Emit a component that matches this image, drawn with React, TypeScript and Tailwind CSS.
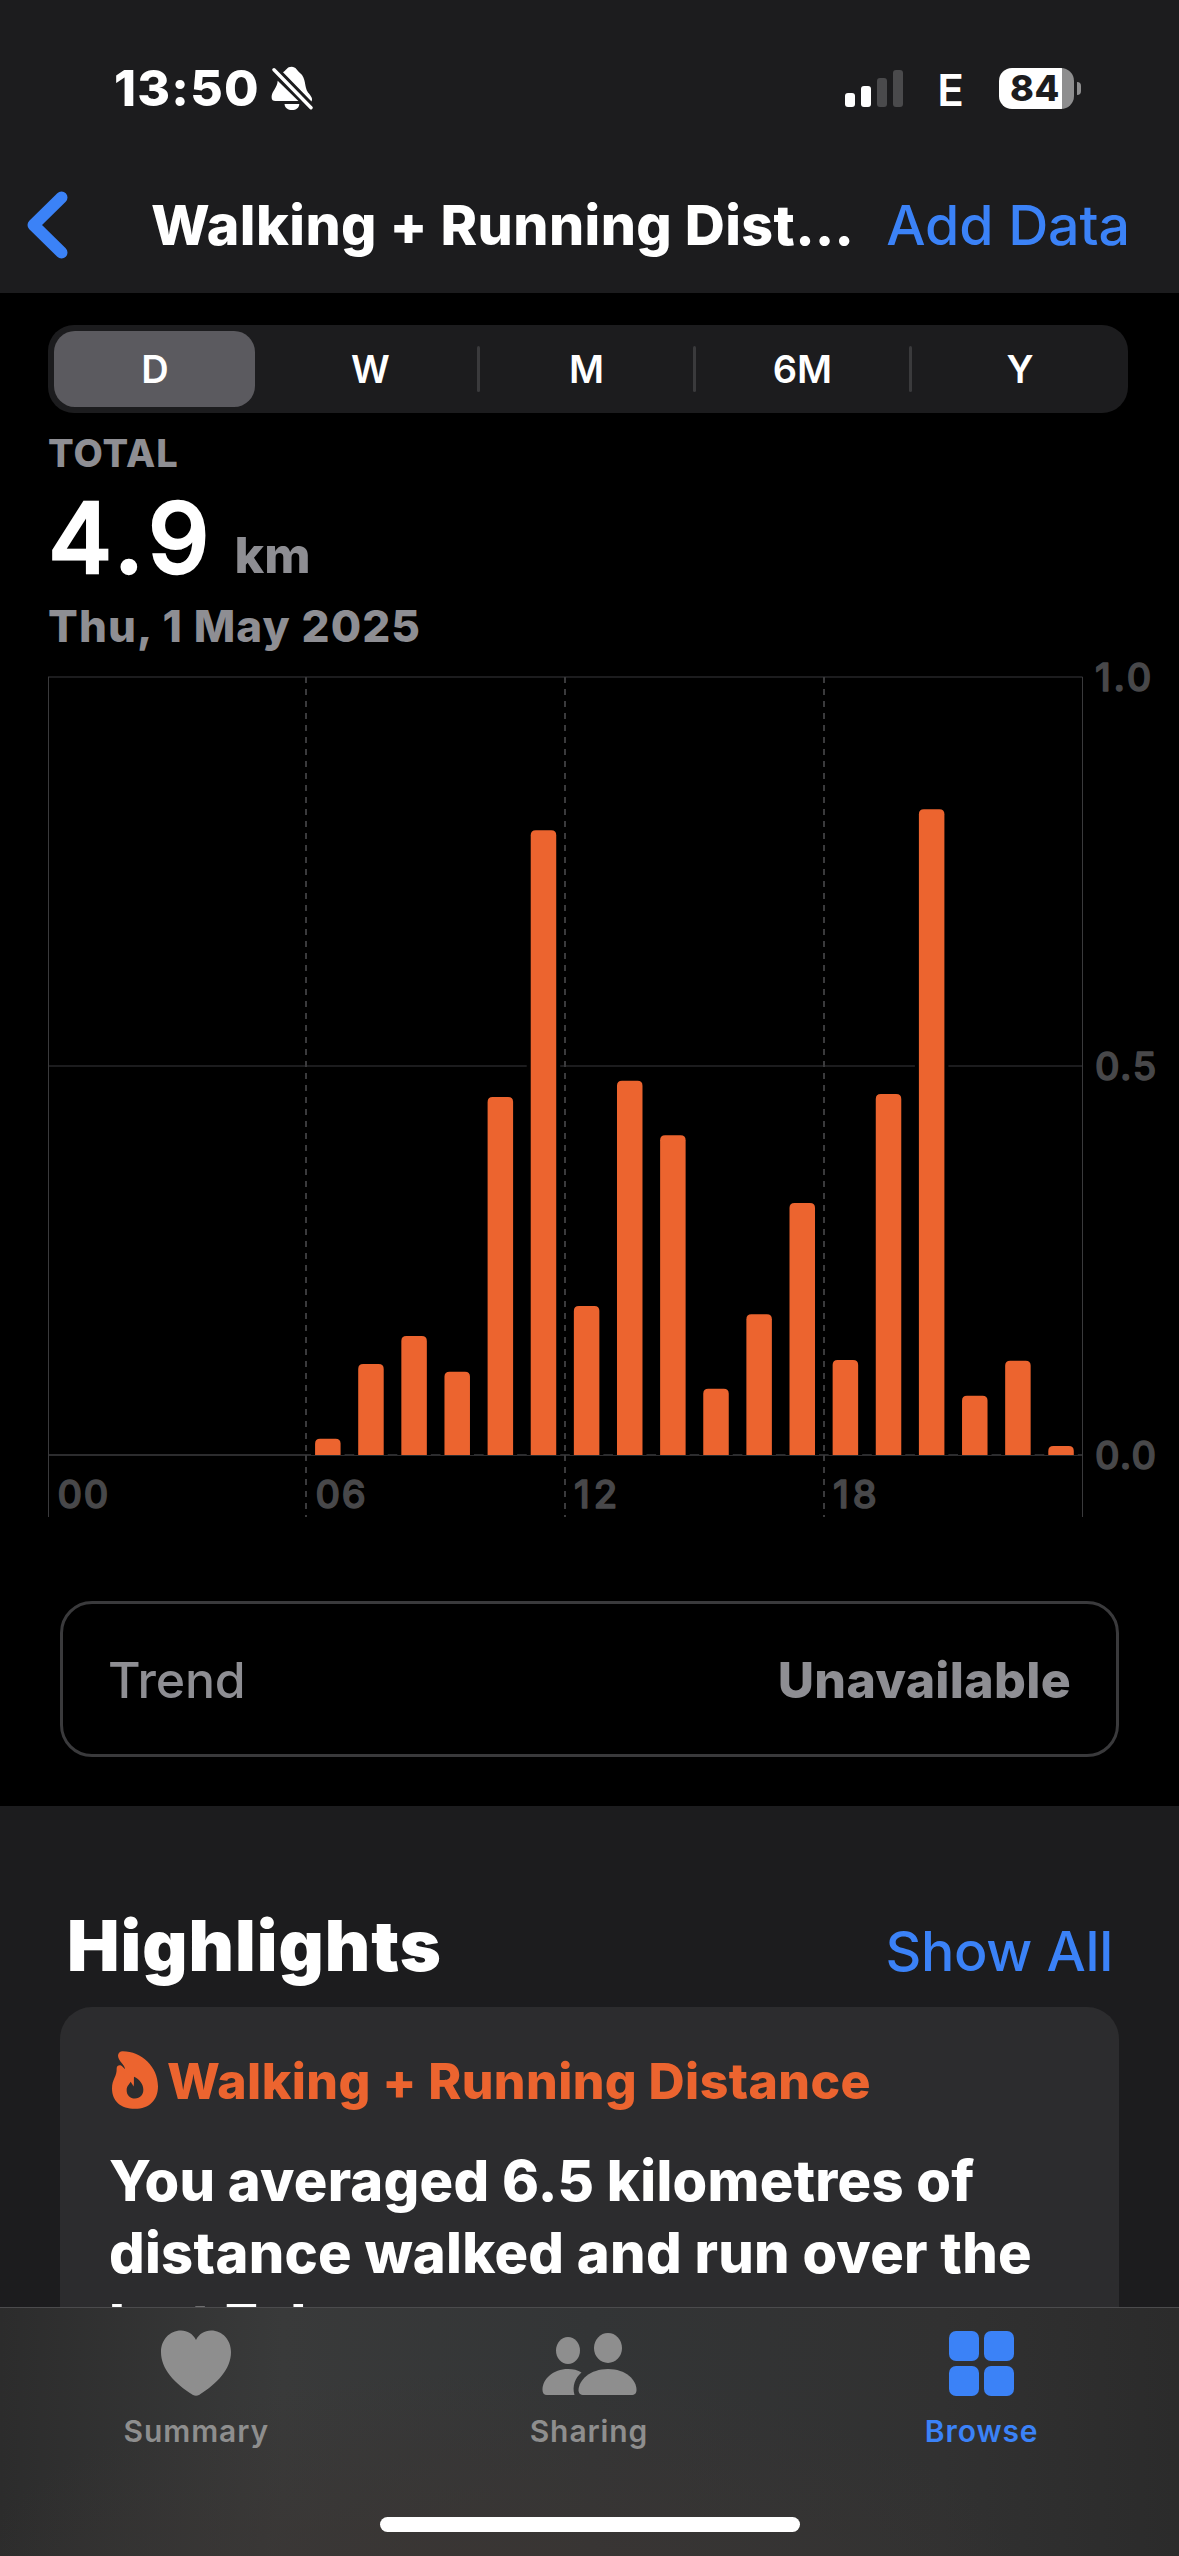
import React from "react";
import clsx from "clsx";

const RANGES = ["D", "W", "M", "6M", "Y"];

// Kilometres per hour of the day
const HOURLY = [
  0, 0, 0, 0, 0, 0, 0.021, 0.117, 0.153, 0.107, 0.46, 0.803, 0.1915, 0.481, 0.411, 0.085, 0.181,
  0.324, 0.122, 0.464, 0.83, 0.076, 0.121, 0.0116,
];

const CHART = { left: 48, right: 1082.5, top: 677, base: 1455, bottom: 1517 };
const HOUR_WIDTH = 43.13;

function BellOff() {
  return (
    <svg width="43" height="44" viewBox="0 0 43 44" fill="white">
      <path d="M6.7 14.7C6.3 22 .6 25 .6 31C.6 34 2 35 4.5 35H27.4Z" />
      <path d="M12 6.3C15 4.5 16 .7 20.6 .7C25 .7 26 4.5 29 7C35.5 12 33 21 37 26.5C41 31 41.8 33 40.5 35.4Z" />
      <path d="M13.5 38H28.3C28 42 25 44 21 44C17 44 13.9 42 13.5 38Z" />
      <path d="M3 3.8L40 41.7" stroke="white" strokeWidth="3.4" strokeLinecap="round" />
    </svg>
  );
}

function Signal() {
  return (
    <svg width="58" height="37" viewBox="0 0 58 37">
      <rect x="0" y="23" width="10" height="14" rx="3" fill="white" />
      <rect x="16" y="16" width="10" height="21" rx="3" fill="white" />
      <rect x="32" y="8" width="10" height="29" rx="3" fill="#4a4a4c" />
      <rect x="48" y="0" width="10" height="37" rx="3" fill="#4a4a4c" />
    </svg>
  );
}

function Battery() {
  return (
    <div className="flex items-center gap-[3px]">
      <div className="h-[41px] w-[75px] rounded-[13px] bg-[linear-gradient(90deg,white_84%,#8e8e8f_84%)] pl-[11px] text-[36px] leading-[41px] font-extrabold tracking-[0.5px] text-[#1c1c1e]">
        84
      </div>
      <div className="h-[13px] w-[4px] rounded-r-full bg-[#8e8e8f]" />
    </div>
  );
}

function Header() {
  return (
    <header className="h-[293px] bg-[#1c1c1e]">
      <div className="flex h-[176px] items-center pr-[98px] pl-[114px]">
        <span className="w-[157px] text-[50px] font-extrabold tracking-[1.2px]">13:50</span>
        <BellOff />
        <div className="ml-auto flex items-center">
          <Signal />
          <span className="mt-[4px] mr-[35px] ml-[34px] text-[44px] leading-none font-semibold">E</span>
          <Battery />
        </div>
      </div>
      <div className="flex h-[98px] items-center pr-[49px] pl-[27px]">
        <svg width="41" height="68" viewBox="0 0 41 68" fill="none">
          <path d="M34.5 6.5L6.5 34L34.5 61.5" stroke="#3b82f7" strokeWidth="12" strokeLinecap="round" strokeLinejoin="round" />
        </svg>
        <h1 className="ml-[83px] text-[55.5px] font-extrabold tracking-[0.4px] whitespace-nowrap">
          Walking + Running Dist…
        </h1>
        <button className="ml-auto text-[55.5px] font-medium tracking-[-0.1px] whitespace-nowrap text-[#3b82f7]">
          Add Data
        </button>
      </div>
    </header>
  );
}

function RangePicker() {
  return (
    <div className="mt-[32px] mr-[51px] ml-[48px] flex h-[88px] items-center rounded-[26px] bg-[#1c1c1e]">
      {RANGES.map((range, i) => (
        <React.Fragment key={range}>
          {i > 1 && <div className="-ml-[3px] h-[46px] w-[3px] rounded-full bg-[#3a3a3c]" />}
          <button className="flex h-full flex-1 p-[6px] text-[38px] font-semibold">
            <span
              className={clsx(
                "flex flex-1 items-center justify-center rounded-[21px]",
                i === 0 && "mr-[3px] bg-[#5b5a5f] pl-[1px]",
                i > 0 && i < 4 && "pr-[3px]"
              )}
            >
              {range}
            </span>
          </button>
        </React.Fragment>
      ))}
    </div>
  );
}

const LABELS = [
  { text: "1.0", x: 1095, y: 691, spacing: 2.8 },
  { text: "0.5", x: 1095, y: 1080, spacing: 1.6 },
  { text: "0.0", x: 1095, y: 1469, spacing: 1.2 },
  { text: "00", x: 57.5, y: 1508, spacing: 1.6 },
  { text: "06", x: 315.5, y: 1508, spacing: 1.6 },
  { text: "12", x: 574, y: 1508, spacing: 4 },
  { text: "18", x: 833, y: 1508, spacing: 4 },
];

function DistanceChart() {
  const { left, right, top, base, bottom } = CHART;
  const middle = (top + base) / 2;
  const bars = HOURLY.map((km, hour) => ({
    hour,
    x: left + 8.3 + hour * HOUR_WIDTH,
    y: base - km * (base - top),
  })).filter((bar) => bar.hour >= 6);

  return (
    <svg className="-mt-[3px] block" width="1179" height="880" viewBox="0 645 1179 880">
      <g strokeWidth="2">
        <path d={`M${left} ${top}H${right}M${left} ${middle}H${right}`} stroke="#1c1c1e" />
        <path d={`M${left} ${base}H${right}`} stroke="#2c2c2e" />
      </g>
      <g stroke="#3a3a3c">
        <path d={`M${left + 0.5} ${top}V${bottom}M${right} ${top}V${bottom}`} strokeWidth="1" />
        {[6, 12, 18].map((hour) => {
          const x = Math.round(47.5 + hour * HOUR_WIDTH);
          return (
            <path key={hour} d={`M${x} ${top}V${base}M${x} ${base}V${bottom}`} strokeWidth="2" strokeDasharray="6 6" />
          );
        })}
      </g>
      {bars.map(({ hour, x, y }) => (
        <g key={hour}>
          <rect x={x - 4} y={y - 4} width="33.5" height={base - y + 4} fill="black" />
          <path d={`M${x} ${base}V${y + 5}q0 -5 5 -5h15.5q5 0 5 5V${base}Z`} fill="#ec642f" />
        </g>
      ))}
      <g
        fill="#48484a"
        stroke="#48484a"
        strokeWidth="1.4"
        strokeLinejoin="round"
        fontSize="38"
        fontWeight="500"
        fontFamily="Inter"
      >
        {LABELS.map(({ text, x, y, spacing }) => (
          <text key={text} x={x} y={y} letterSpacing={spacing}>
            {text}
          </text>
        ))}
      </g>
    </svg>
  );
}

function Flame() {
  return (
    <svg className="mb-[2px]" width="46" height="58" viewBox="36 45 138 173" fill="#ec642f">
      <path
        fillRule="evenodd"
        d="M68 45C125 45 174 92 174 150C174 192 147 218 105 218C63 218 36 195 36 157C36 128 51 122 50 96C50 87 61 84 67 91L75 99C74 84 55 76 54 59C54 50 60 45 68 45ZM102 122C119 129 130 145 130 161C130 177 120 187 105 187C90 187 80 177 80 162C80 150 87 146 92 137L101 151C103 140 101 132 102 122Z"
      />
    </svg>
  );
}

function Heart() {
  return (
    <svg width="70" height="66" viewBox="0 0 70 66" fill="#8e8e8e">
      <path d="M35 10C38 4 43.500 .5 50 .5C61.500 .5 70 10 70 22C70 39 56.500 53.500 38 65Q35 66.500 32 65C13.500 53.500 0 39 0 22C0 10 8.500 .5 20 .5C26.500 .5 32 4 35 10Z" />
    </svg>
  );
}

function People() {
  return (
    <svg width="95" height="63" viewBox="0 0 95 63" fill="#8e8e8e">
      <ellipse cx="26" cy="18.500" rx="12" ry="13.500" />
      <ellipse cx="66" cy="16" rx="14" ry="15" />
      <path d="M5 63C2 63 .5 61 .5 58C.5 47 11 37 26 37C31 37 36 38 39.500 40.500C33 46 30 54 32.500 63Z" />
      <path d="M42 63C38 63 36.500 61 36.500 58C37 48 48 37 66 37C84 37 94.500 48 94.500 58C94.500 61 93 63 89 63Z" />
    </svg>
  );
}

function Grid() {
  return (
    <svg width="65" height="65" viewBox="0 0 65 65" fill="#3b82f7">
      <rect x="0" y="0" width="30" height="30" rx="7" />
      <rect x="35" y="0" width="30" height="30" rx="7" />
      <rect x="0" y="35" width="30" height="30" rx="7" />
      <rect x="35" y="35" width="30" height="30" rx="7" />
    </svg>
  );
}

const TABS = [
  { label: "Summary", icon: <Heart />, active: false },
  { label: "Sharing", icon: <People />, active: false },
  { label: "Browse", icon: <Grid />, active: true },
];

function TabBar() {
  return (
    <nav className="absolute inset-x-0 bottom-0 flex h-[249px] flex-col border-t border-[#4b4b4d] bg-[radial-gradient(ellipse_at_42%_115%,#3a3533_0%,transparent_55%),linear-gradient(90deg,#2c2c2c_0%,#393a3a_24%,#333536_50%,#313131_80%,#2b2b2b_100%)]">
      <div className="flex pt-[22px] pr-[1px]">
        {TABS.map(({ label, icon, active }) => (
          <div key={label} className="flex flex-1 flex-col items-center">
            <div className="flex h-[66px] items-center">{icon}</div>
            <span
              className={clsx(
                "mt-[15px] text-[30px] leading-[40px] font-semibold tracking-[0.9px]",
                active ? "text-[#3b82f7]" : "text-[#8e8e8e]"
              )}
            >
              {label}
            </span>
          </div>
        ))}
      </div>
      <div className="mx-auto mt-auto mb-[24px] h-[15px] w-[420px] rounded-full bg-white" />
    </nav>
  );
}

export default function App() {
  return (
    <div className="relative h-[2556px] w-[1179px] overflow-hidden bg-[#1c1c1e] font-[Inter,sans-serif] text-white">
      <Header />

      <main className="flex h-[1513px] flex-col bg-black">
        <RangePicker />

        {/* Daily total */}
        <div className="mt-[18px] pl-[48px] font-extrabold text-[#8e8e93]">
          <p className="text-[38px] leading-[45px] tracking-[1px]">TOTAL</p>
          <p className="mt-[12px] flex h-[100px] items-baseline gap-[20px] text-[50px]">
            <span className="text-[98px] leading-[99px] font-medium tracking-[5px] text-white [-webkit-text-stroke:2.5px_white] [stroke-linejoin:round]">
              4.9
            </span>
            km
          </p>
          <p className="mt-[16px] text-[44px] leading-[44px] tracking-[1.1px]">Thu, 1 May 2025</p>
        </div>

        <DistanceChart />

        <div className="mt-[76px] mr-[60px] ml-[60px] flex h-[156px] items-center justify-between rounded-[32px] border-[3px] border-[#3a3a3c] pt-[2px] pr-[45px] pl-[45px] text-[50px] text-[#8e8e93]">
          <span className="font-medium tracking-[-0.2px]">Trend</span>
          <span className="font-extrabold tracking-[0.3px]">Unavailable</span>
        </div>
      </main>

      <section className="px-[60px] pt-[94px]">
        <div className="flex h-[90px] items-baseline justify-between pr-[6px] pl-[7px]">
          <h2 className="text-[70px] leading-[92px] font-black tracking-[1px]">Highlights</h2>
          <button className="text-[55.5px] font-medium tracking-[-0.3px] text-[#3b82f7]">Show All</button>
        </div>
        <div className="mt-[17px] h-[600px] rounded-[32px] bg-[#2c2c2e] pt-[44px] pl-[49px]">
          <div className="flex h-[60px] items-center gap-[9px] pl-[3px] text-[50px] font-extrabold tracking-[0.4px] text-[#ec642f]">
            <Flame />
            Walking + Running Distance
          </div>
          <p className="mt-[34px] text-[56px] leading-[72px] font-extrabold tracking-[0.27px] whitespace-nowrap">
            You averaged 6.5 kilometres of
            <br />
            distance walked and run over the
            <br />
            last 7 days.
          </p>
        </div>
      </section>

      <TabBar />
    </div>
  );
}
